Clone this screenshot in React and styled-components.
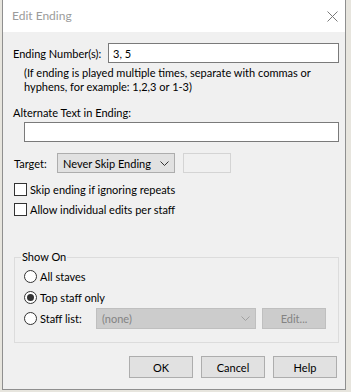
import React from "react";
import styled, { createGlobalStyle } from "styled-components";

const GlobalStyle = createGlobalStyle`
  html, body {
    margin: 0;
    padding: 0;
    background: #e7e5de;
    font-family: Lato, "Liberation Sans", sans-serif;
    font-size: 11px;
    color: #000;
  }
`;

const Window = styled.div`
  margin-left: 2px;
  width: 344px;
  height: 390px;
  box-sizing: border-box;
  border: 1px solid #8f8f8f;
  border-top: none;
  background: #f0f0f0;
  display: flex;
  flex-direction: column;
`;

const TitleBar = styled.div`
  height: 32px;
  flex: none;
  background: #fff;
  display: flex;
  align-items: center;
  justify-content: space-between;
  padding: 0 7px 0 9px;
`;

const Title = styled.span`
  font-size: 12px;
  color: #9b9b9b;
  margin-top: -2px;
`;

const Body = styled.div`
  flex: 1;
  display: flex;
  flex-direction: column;
  padding: 11px 6px 0 10px;
`;

const FieldRow = styled.div`
  display: flex;
  align-items: center;
  height: ${(p) => p.h || 20}px;
  margin-top: ${(p) => p.mt || 0}px;
`;

const Label = styled.span`
  white-space: nowrap;
  width: ${(p) => (p.w ? `${p.w}px` : "auto")};
  margin-left: ${(p) => p.ml || 0}px;
  flex: none;
`;

const TextBox = styled.input`
  box-sizing: border-box;
  height: 20px;
  border: 1px solid #7a7a7a;
  background: #fff;
  font: inherit;
  color: #000;
  padding: 0 4px;
  outline: none;
  flex: ${(p) => (p.grow ? 1 : "none")};
  width: ${(p) => (p.w ? `${p.w}px` : "auto")};
  margin-left: ${(p) => p.ml || 0}px;
`;

const Help = styled.div`
  margin: 3px 0 0 11px;
  line-height: 14px;
`;

const Select = styled.div`
  box-sizing: border-box;
  width: ${(p) => p.w}px;
  height: ${(p) => p.h || 20}px;
  flex: none;
  display: flex;
  align-items: center;
  justify-content: space-between;
  padding: 0 5px 0 5px;
  border: 1px solid ${(p) => (p.disabled ? "#bfbfbf" : "#adadad")};
  background: ${(p) => (p.disabled ? "#cccccc" : "#e1e1e1")};
  color: ${(p) => (p.disabled ? "#838383" : "#000")};
  margin-left: ${(p) => p.ml || 0}px;
`;

const EmptyBox = styled.div`
  box-sizing: border-box;
  width: 48px;
  height: 20px;
  margin-left: 8px;
  border: 1px solid #d4d4d4;
  background: #f0f0f0;
`;

const CheckList = styled.div`
  display: flex;
  flex-direction: column;
  gap: 7px;
  margin: 10px 0 0 1px;
`;

const CheckRow = styled.label`
  display: flex;
  align-items: center;
  height: 13px;
  gap: 3px;
`;

const Box = styled.span`
  box-sizing: border-box;
  width: 13px;
  height: 13px;
  border: 1px solid #333;
  background: #fff;
  flex: none;
`;

const Group = styled.fieldset`
  margin: 34px 0 0 1px;
  padding: 2px 0 13px 9px;
  border: 1px solid #dcdcdc;
  min-width: 0;
`;

const Legend = styled.legend`
  padding: 0 1px;
  margin-left: -3px;
  line-height: 14px;
`;

const RadioRow = styled.div`
  display: flex;
  align-items: center;
  height: 21px;
`;

const Radio = styled.span`
  box-sizing: border-box;
  width: 13px;
  height: 13px;
  border-radius: 50%;
  border: 1px solid #333;
  background: #fff;
  flex: none;
  display: flex;
  align-items: center;
  justify-content: center;
  margin-right: 3px;
  &::after {
    content: "";
    width: 7px;
    height: 7px;
    border-radius: 50%;
    background: ${(p) => (p.checked ? "#333" : "transparent")};
  }
`;

const Button = styled.div`
  box-sizing: border-box;
  width: 64px;
  height: ${(p) => p.h || 22}px;
  display: flex;
  align-items: center;
  justify-content: center;
  flex: none;
  border: 1px solid ${(p) => (p.disabled ? "#bfbfbf" : "#adadad")};
  background: ${(p) => (p.disabled ? "#cccccc" : "#e1e1e1")};
  color: ${(p) => (p.disabled ? "#838383" : "#000")};
  margin-left: ${(p) => p.ml || 0}px;
`;

const ButtonBar = styled.div`
  display: flex;
  justify-content: flex-end;
  gap: 8px;
  margin: 13px 2px 0 0;
`;

const Chevron = ({ color = "#333" }) => (
  <svg width="9" height="5" viewBox="0 0 9 5">
    <path d="M0.5 0.5 L4.5 4.5 L8.5 0.5" fill="none" stroke={color} strokeWidth="1" />
  </svg>
);

const Close = () => (
  <svg width="11" height="11" viewBox="0 0 11 11">
    <path d="M0.5 0.5 L10.5 10.5 M10.5 0.5 L0.5 10.5" stroke="#7a7a7a" strokeWidth="1" />
  </svg>
);

export default function App() {
  return (
    <>
      <GlobalStyle />
      <Window>
        <TitleBar>
          <Title>Edit Ending</Title>
          <Close />
        </TitleBar>
        <Body>
          <FieldRow>
            <Label w={95}>Ending Number(s):</Label>
            <TextBox grow defaultValue="3, 5" />
          </FieldRow>
          <Help>
            (If ending is played multiple times, separate with commas or
            <br />
            hyphens, for example: 1,2,3 or 1-3)
          </Help>
          <FieldRow h={14} mt={11}>
            <Label>Alternate Text in Ending:</Label>
          </FieldRow>
          <FieldRow mt={3}>
            <TextBox grow ml={11} defaultValue="" />
          </FieldRow>
          <FieldRow mt={11}>
            <Label w={43} ml={1}>Target:</Label>
            <Select w={118}>
              <span>Never Skip Ending</span>
              <Chevron />
            </Select>
            <EmptyBox />
          </FieldRow>
          <CheckList>
            <CheckRow>
              <Box />
              Skip ending if ignoring repeats
            </CheckRow>
            <CheckRow>
              <Box />
              Allow individual edits per staff
            </CheckRow>
          </CheckList>
          <Group>
            <Legend>Show On</Legend>
            <RadioRow>
              <Radio />
              All staves
            </RadioRow>
            <RadioRow>
              <Radio checked />
              Top staff only
            </RadioRow>
            <RadioRow>
              <Radio />
              <Label w={56}>Staff list:</Label>
              <Select w={160} h={21} disabled>
                <span>(none)</span>
                <Chevron color="#a0a0a0" />
              </Select>
              <Button h={21} ml={6} disabled>
                Edit...
              </Button>
            </RadioRow>
          </Group>
          <ButtonBar>
            <Button>OK</Button>
            <Button>Cancel</Button>
            <Button>Help</Button>
          </ButtonBar>
        </Body>
      </Window>
    </>
  );
}
